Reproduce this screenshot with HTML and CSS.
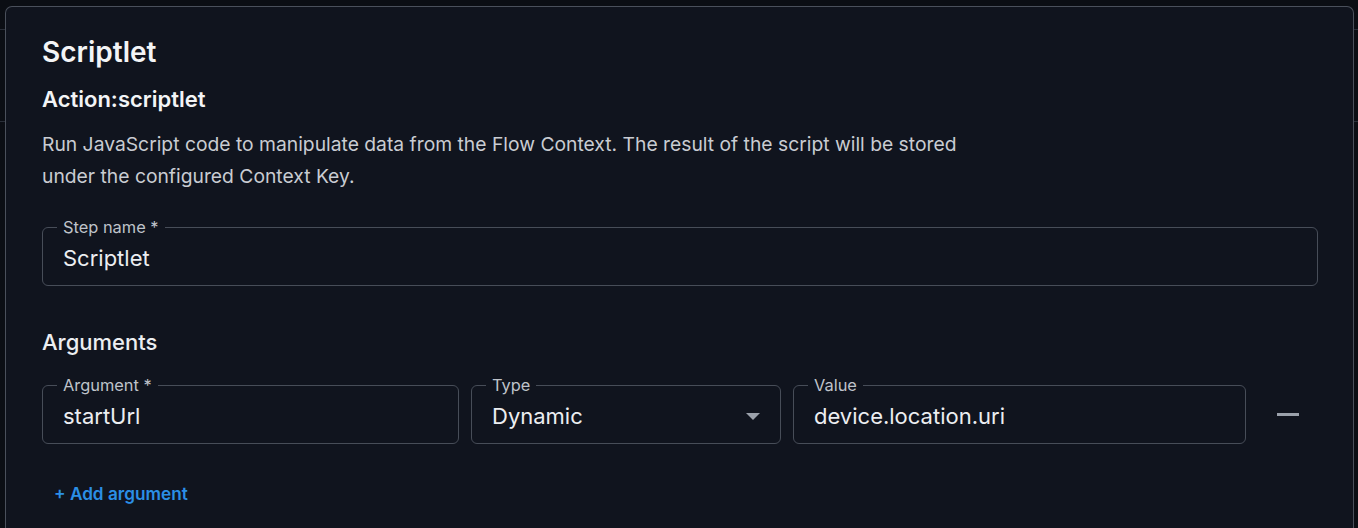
FILE: index.html
```html
<!DOCTYPE html>
<html lang="en">
<head>
  <meta charset="UTF-8" />
  <title>Scriptlet</title>
  <link rel="stylesheet" href="styles.css">
</head>
<body>
  <!-- Step editor panel -->
  <div class="panel">
    <h1 class="title">Scriptlet</h1>
    <h2 class="action">Action:scriptlet</h2>
    <p class="desc">Run JavaScript code to manipulate data from the Flow Context. The result of the script will be stored under the configured Context Key.</p>

    <fieldset class="field step-field">
      <legend>Step name *</legend>
      <input class="field-input" type="text" value="Scriptlet">
    </fieldset>

    <h3 class="section">Arguments</h3>

    <div class="arg-row">
      <fieldset class="field">
        <legend>Argument *</legend>
        <input class="field-input" type="text" value="startUrl">
      </fieldset>
      <fieldset class="field">
        <legend>Type</legend>
        <div class="select">
          <span>Dynamic</span>
          <span class="caret"></span>
        </div>
      </fieldset>
      <fieldset class="field">
        <legend>Value</legend>
        <input class="field-input" type="text" value="device.location.uri">
      </fieldset>
      <button class="remove-btn" title="Remove"><span class="minus"></span></button>
    </div>

    <button class="add-btn">+ Add argument</button>
  </div>
</body>
</html>
```

FILE: styles.css
```css
* {
  margin: 0;
  padding: 0;
  box-sizing: border-box;
}

html, body {
  height: 100%;
  overflow: hidden;
}

body {
  font-family: Inter, 'Noto Sans', sans-serif;
  color: #e6e8ec;
  padding: 6px 4px 0 5px;
  background:
    linear-gradient(#2a2f39, #2a2f39) 0 29px / 100% 1px no-repeat,
    linear-gradient(#2a2f39, #2a2f39) 0 121px / 100% 1px no-repeat,
    #0b0e14;
}

.panel {
  background: #10141e;
  border: 1px solid #4a505b;
  border-bottom: none;
  border-radius: 7px 7px 0 0;
  min-height: 640px;
  padding: 29px 35px 0 36px;
}

.title {
  font-size: 28px;
  line-height: 32px;
  font-weight: 600;
  color: #f3f4f6;
}

.action {
  margin-top: 17px;
  font-size: 22px;
  line-height: 28px;
  font-weight: 600;
  color: #f3f4f6;
}

.desc {
  margin-top: 15px;
  max-width: 960px;
  font-size: 19.3px;
  line-height: 32px;
  color: #c9ccd2;
}

.field {
  border: 1px solid #474d58;
  border-radius: 6px;
  padding: 0 14px;
  min-width: 0;
}

.field legend {
  padding: 0 6px;
  font-size: 16.4px;
  line-height: 18px;
  color: #bfc3ca;
}

.step-field {
  margin-top: 26px;
}

.field-input {
  display: block;
  width: 100%;
  height: 49px;
  padding: 10px 6px 15px;
  background: transparent;
  border: none;
  outline: none;
  font-family: inherit;
  font-size: 22px;
  line-height: 24px;
  color: #eceef1;
}

.section {
  margin-top: 42px;
  font-size: 22px;
  line-height: 28px;
  font-weight: 500;
  color: #eceef1;
}

.arg-row {
  margin-top: 20px;
  display: grid;
  grid-template-columns: 417px 310px 1fr 60px;
  gap: 12px;
}

.select {
  display: flex;
  align-items: center;
  justify-content: space-between;
  height: 49px;
  padding: 10px 6px 15px;
  font-size: 22px;
  line-height: 24px;
  color: #eceef1;
}

.caret {
  width: 0;
  height: 0;
  border-left: 7px solid transparent;
  border-right: 7px solid transparent;
  border-top: 7px solid #9ba1ab;
}

.remove-btn {
  align-self: end;
  height: 60px;
  background: none;
  border: none;
  display: flex;
  align-items: center;
  justify-content: center;
  cursor: pointer;
}

.minus {
  display: block;
  width: 22px;
  height: 3px;
  background: #9ba1ab;
}

.add-btn {
  margin-top: 32px;
  padding: 6px 12px;
  background: none;
  border: none;
  font-family: inherit;
  font-size: 17.2px;
  line-height: 24px;
  font-weight: 600;
  color: #2b8fe6;
  cursor: pointer;
}
```
